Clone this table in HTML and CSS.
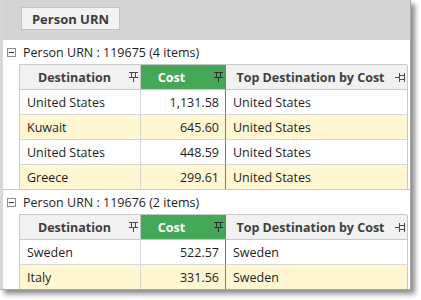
FILE: index.html
```html
<!DOCTYPE html>
<html>
<head>
<meta charset="utf-8">
<link rel="stylesheet" href="styles.css">
</head>
<body>
<div class="panel">
  <div class="groupbar"><div class="groupbtn">Person URN</div></div>
  <div class="content">
    <div class="group">
      <div class="grouprow"><span class="expander"></span><span class="grouptext">Person URN : 119675 (4 items)</span></div>
      <div class="grid">
        <div class="hcell"><span class="htext">Destination</span><svg class="pin" viewBox="0 0 9 10"><path d="M0 0.5H9M2.5 0.5V5.5M6.5 0.5V5.5M0 5.5H9M4.5 5.5V10"/></svg></div>
        <div class="hcell sorted"><span class="htext">Cost</span><svg class="pin" viewBox="0 0 9 10"><path d="M0 0.5H9M2.5 0.5V5.5M6.5 0.5V5.5M0 5.5H9M4.5 5.5V10"/></svg></div>
        <div class="hcell last"><span class="htext">Top Destination by Cost</span><svg class="pin hpin" viewBox="0 0 10 9"><path d="M9.5 0V9M9.5 2.5H4.5M9.5 6.5H4.5M4.5 0V9M4.5 4.5H0"/></svg></div>

        <div class="cell">United States</div><div class="cell num">1,131.58</div><div class="cell last">United States</div>
        <div class="cell alt">Kuwait</div><div class="cell num alt">645.60</div><div class="cell last alt">United States</div>
        <div class="cell">United States</div><div class="cell num">448.59</div><div class="cell last">United States</div>
        <div class="cell alt end">Greece</div><div class="cell num alt end">299.61</div><div class="cell last alt end">United States</div>
      </div>
    </div>
    <div class="group">
      <div class="grouprow"><span class="expander"></span><span class="grouptext">Person URN : 119676 (2 items)</span></div>
      <div class="grid">
        <div class="hcell"><span class="htext">Destination</span><svg class="pin" viewBox="0 0 9 10"><path d="M0 0.5H9M2.5 0.5V5.5M6.5 0.5V5.5M0 5.5H9M4.5 5.5V10"/></svg></div>
        <div class="hcell sorted"><span class="htext">Cost</span><svg class="pin" viewBox="0 0 9 10"><path d="M0 0.5H9M2.5 0.5V5.5M6.5 0.5V5.5M0 5.5H9M4.5 5.5V10"/></svg></div>
        <div class="hcell last"><span class="htext">Top Destination by Cost</span><svg class="pin hpin" viewBox="0 0 10 9"><path d="M9.5 0V9M9.5 2.5H4.5M9.5 6.5H4.5M4.5 0V9M4.5 4.5H0"/></svg></div>

        <div class="cell">Sweden</div><div class="cell num">522.57</div><div class="cell last">Sweden</div>
        <div class="cell alt end">Italy</div><div class="cell num alt end">331.56</div><div class="cell last alt end">Sweden</div>
      </div>
    </div>
  </div>
</div>
</body>
</html>
```

FILE: styles.css
```css
* { box-sizing: border-box; }
html, body { margin: 0; padding: 0; background: #ffffff; }
body {
  font-family: "Open Sans", "Noto Sans", sans-serif;
  font-size: 12.5px;
  color: #1e1e1e;
  width: 421px;
  height: 300px;
  overflow: hidden;
}
.panel {
  width: 411px;
  height: 290px;
  background: #ffffff;
  border-left: 3px solid #d6d6d6;
  border-right: 1px solid #a8a8a8;
  border-bottom: 1px solid #a8a8a8;
  box-shadow: 4px 4px 5px rgba(0, 0, 0, 0.45);
  overflow: hidden;
}
.groupbar {
  height: 40px;
  background: #d4d4d4;
  padding: 7px 0 0 18px;
}
.groupbtn {
  width: 99px;
  height: 23px;
  background: #f2f2f2;
  border: 1px solid #c4c4c4;
  font-weight: bold;
  font-size: 13px;
  color: #3c3c3c;
  display: flex;
  align-items: center;
  justify-content: center;
}
.group {
  border-bottom: 1px solid #c8c8c8;
}
.group:last-child { border-bottom: none; }
.grouprow {
  height: 24px;
  display: flex;
  align-items: center;
  padding-left: 4px;
}
.expander {
  width: 9px;
  height: 9px;
  border: 1px solid #8c8c8c;
  position: relative;
  margin-right: 7px;
  margin-top: 1px;
}
.expander::after {
  content: "";
  position: absolute;
  left: 1px;
  right: 1px;
  top: 3px;
  height: 1px;
  background: #333;
}
.grouptext { color: #1e1e1e; }
.grid {
  margin-left: 16px;
  width: 388px;
  display: grid;
  grid-template-columns: 121px 85px 182px;
  border-top: 1px solid #c8c8c8;
  border-left: 1px solid #c8c8c8;
}
.hcell {
  height: 25px;
  background: #f1f1f1;
  border-right: 1px solid #c8c8c8;
  border-bottom: 1px solid #c8c8c8;
  display: flex;
  align-items: center;
  font-weight: bold;
  color: #404040;
  padding-right: 2px;
}
.hcell .htext { flex: 1; text-align: center; }
.hcell.sorted {
  background: #45a858;
  color: #ffffff;
  border-right: 1px solid #7a7a7a;
}
.hcell.sorted .htext { padding-right: 12px; }
.hcell.last { border-right: 1px solid #c8c8c8; }
.pin {
  width: 9px;
  height: 10px;
  fill: none;
  stroke: #4a4a4a;
  stroke-width: 1;
}
.hcell.sorted .pin { stroke: #2d2d2d; }
.pin.hpin { width: 10px; height: 9px; }
.cell {
  height: 25px;
  border-right: 1px solid #d8d8d8;
  border-bottom: 1px solid #d8d8d8;
  display: flex;
  align-items: center;
  padding: 0 7px;
  white-space: nowrap;
  background: #ffffff;
}
.cell.num {
  justify-content: flex-end;
  padding-right: 6px;
  border-right: 1px solid #7a7a7a;
}
.cell.last { border-right: 1px solid #c8c8c8; }
.cell.alt { background: #fff7d1; }
.cell.end { border-bottom: none; height: 24px; }
```
